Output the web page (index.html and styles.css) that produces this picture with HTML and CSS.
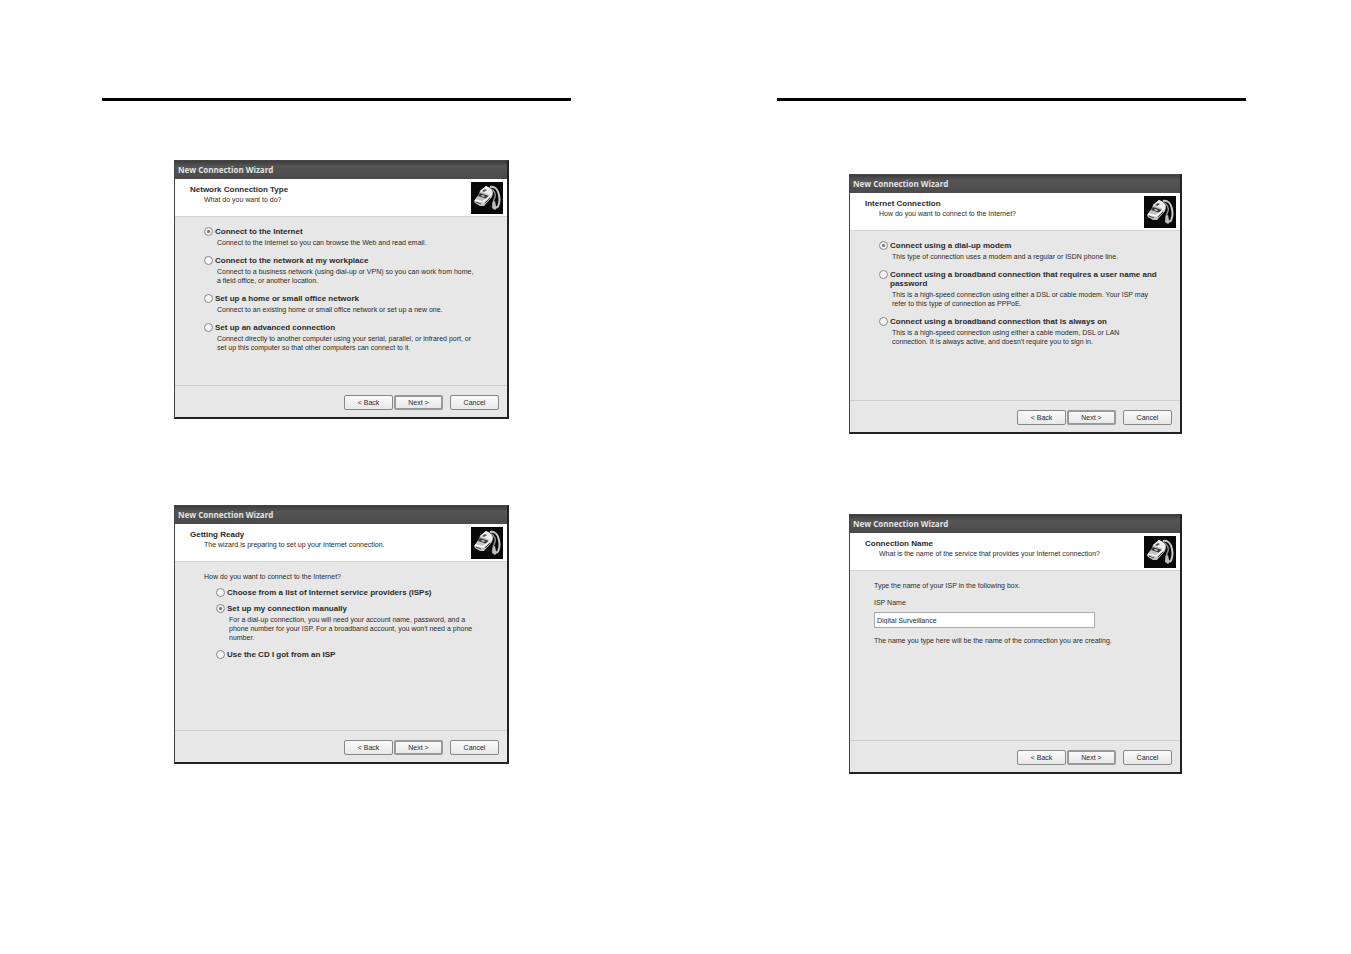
FILE: index.html
```html
<!DOCTYPE html>
<html lang="en">
<head>
    <meta charset="UTF-8">
    <meta name="viewport" content="width=device-width, initial-scale=1.0">
    <title>New Connection Wizard</title>
    <link rel="stylesheet" href="styles.css">
</head>
<body>
    <!-- Modem icon shared by all the dialogs -->
    <svg class="sprite" aria-hidden="true">
        <symbol id="modem" viewBox="0 0 32 32">
            <rect width="32" height="32" fill="#080808"/>
            <path d="M19 5 C24 4 27 8 28 13 C29 18 29 22 26 26" fill="none" stroke="#c8c8c8" stroke-width="2"/>
            <path d="M20 7 C23 8 25 12 24 15 C23 18 21 20 22 25" fill="none" stroke="#8c8c8c" stroke-width="1.5"/>
            <path d="M22 20 L24 19 L25 24 L27 25 L24 28 L21 26 Z" fill="#bdbdbd"/>
            <path d="M3 19 L8 12 L9 9 L15 4 L19 6 L22 11 L21 15 L13 24 L9 24 L4 21 Z" fill="#c4c4c4"/>
            <path d="M9 9 L15 4 L19 6 L22 10 L19 13 Z" fill="#efefef"/>
            <path d="M11 9 L14 7 L16 8 L13 10 Z" fill="#555"/>
            <path d="M9 11 L18 14 L16 17 L7 14 Z" fill="#383838"/>
            <path d="M11 13 L14 14 L13 15 L10 14 Z" fill="#ddd"/>
            <path d="M4 18 L12 20 L21 12" fill="none" stroke="#fff" stroke-width="1.5"/>
            <path d="M5 20 L10 22 M14 21 L19 16" fill="none" stroke="#4a4a4a" stroke-width="1"/>
        </symbol>
    </svg>

    <main class="spread">
        <section class="page page-left">
            <hr>
            <form class="wizard">
                <h2 class="titlebar">New Connection Wizard</h2>
                <header class="heading">
                    <div>
                        <h3>Network Connection Type</h3>
                        <p>What do you want to do?</p>
                    </div>
                    <svg class="modem"><use href="#modem"/></svg>
                </header>
                <div class="content">
                    <div class="option">
                        <input type="radio" name="type" id="internet" checked>
                        <label for="internet">Connect to the Internet</label>
                        <p>Connect to the Internet so you can browse the Web and read email.</p>
                    </div>
                    <div class="option">
                        <input type="radio" name="type" id="workplace">
                        <label for="workplace">Connect to the network at my workplace</label>
                        <p>Connect to a business network (using dial-up or VPN) so you can work from home,<br>a field office, or another location.</p>
                    </div>
                    <div class="option">
                        <input type="radio" name="type" id="home">
                        <label for="home">Set up a home or small office network</label>
                        <p>Connect to an existing home or small office network or set up a new one.</p>
                    </div>
                    <div class="option">
                        <input type="radio" name="type" id="advanced">
                        <label for="advanced">Set up an advanced connection</label>
                        <p>Connect directly to another computer using your serial, parallel, or infrared port, or<br>set up this computer so that other computers can connect to it.</p>
                    </div>
                </div>
                <footer class="actions">
                    <button type="button">&lt; Back</button>
                    <button type="button" class="default">Next &gt;</button>
                    <button type="button" class="cancel">Cancel</button>
                </footer>
            </form>

            <form class="wizard">
                <h2 class="titlebar">New Connection Wizard</h2>
                <header class="heading">
                    <div>
                        <h3>Getting Ready</h3>
                        <p>The wizard is preparing to set up your Internet connection.</p>
                    </div>
                    <svg class="modem"><use href="#modem"/></svg>
                </header>
                <div class="content ready">
                    <p>How do you want to connect to the Internet?</p>
                    <div class="option">
                        <input type="radio" name="method" id="list">
                        <label for="list">Choose from a list of Internet service providers (ISPs)</label>
                    </div>
                    <div class="option">
                        <input type="radio" name="method" id="manual" checked>
                        <label for="manual">Set up my connection manually</label>
                        <p>For a dial-up connection, you will need your account name, password, and a<br>phone number for your ISP. For a broadband account, you won't need a phone<br>number.</p>
                    </div>
                    <div class="option">
                        <input type="radio" name="method" id="cd">
                        <label for="cd">Use the CD I got from an ISP</label>
                    </div>
                </div>
                <footer class="actions">
                    <button type="button">&lt; Back</button>
                    <button type="button" class="default">Next &gt;</button>
                    <button type="button" class="cancel">Cancel</button>
                </footer>
            </form>
        </section>

        <section class="page page-right">
            <hr>
            <form class="wizard">
                <h2 class="titlebar">New Connection Wizard</h2>
                <header class="heading">
                    <div>
                        <h3>Internet Connection</h3>
                        <p>How do you want to connect to the Internet?</p>
                    </div>
                    <svg class="modem"><use href="#modem"/></svg>
                </header>
                <div class="content">
                    <div class="option">
                        <input type="radio" name="link" id="dialup" checked>
                        <label for="dialup">Connect using a dial-up modem</label>
                        <p>This type of connection uses a modem and a regular or ISDN phone line.</p>
                    </div>
                    <div class="option">
                        <input type="radio" name="link" id="pppoe">
                        <label for="pppoe">Connect using a broadband connection that requires a user name and<br>password</label>
                        <p>This is a high-speed connection using either a DSL or cable modem. Your ISP may<br>refer to this type of connection as PPPoE.</p>
                    </div>
                    <div class="option">
                        <input type="radio" name="link" id="always">
                        <label for="always">Connect using a broadband connection that is always on</label>
                        <p>This is a high-speed connection using either a cable modem, DSL or LAN<br>connection. It is always active, and doesn't require you to sign in.</p>
                    </div>
                </div>
                <footer class="actions">
                    <button type="button">&lt; Back</button>
                    <button type="button" class="default">Next &gt;</button>
                    <button type="button" class="cancel">Cancel</button>
                </footer>
            </form>

            <form class="wizard">
                <h2 class="titlebar">New Connection Wizard</h2>
                <header class="heading">
                    <div>
                        <h3>Connection Name</h3>
                        <p>What is the name of the service that provides your Internet connection?</p>
                    </div>
                    <svg class="modem"><use href="#modem"/></svg>
                </header>
                <div class="content naming">
                    <p>Type the name of your ISP in the following box.</p>
                    <label for="isp">ISP Name</label>
                    <input type="text" id="isp" value="Digital Surveillance">
                    <p>The name you type here will be the name of the connection you are creating.</p>
                </div>
                <footer class="actions">
                    <button type="button">&lt; Back</button>
                    <button type="button" class="default">Next &gt;</button>
                    <button type="button" class="cancel">Cancel</button>
                </footer>
            </form>
        </section>
    </main>
</body>
</html>
```
FILE: styles.css
```css
* {
    margin: 0;
    padding: 0;
    box-sizing: border-box;
}

body {
    background-color: #fff;
    color: #2a2a2a;
    font-family: "Liberation Sans", Arial, sans-serif;
    font-size: 7px;
    line-height: 9px;
}

.sprite {
    display: none;
}

/* Two printed pages side by side */
.spread {
    display: grid;
    grid-template-columns: 1fr 1fr;
    margin-right: 1px;
}

.page {
    display: flex;
    flex-direction: column;
    padding: 98px 104px 0 102px;
}

.page hr {
    border: none;
    height: 3px;
    background-color: #000;
}

.page-left {
    gap: 86px;
}

.page-left hr {
    margin-bottom: -27px;
}

.page-right {
    gap: 80px;
}

.page-right hr {
    margin-bottom: -7px;
}

.wizard {
    display: flex;
    flex-direction: column;
    min-height: 259px;
    margin: 0 62px 0 72px;
    background-color: #e7e7e7;
    border: 1px solid #444;
    border-right: 2px solid #222;
    border-bottom: 2px solid #222;
}

.page-right .wizard {
    min-height: 260px;
    margin-right: 64px;
}

.titlebar {
    height: 18px;
    padding-left: 3px;
    background: linear-gradient(#3c3c3c, #555 30%, #4a4a4a);
    color: #e4e4e4;
    font-family: "Open Sans", sans-serif;
    font-size: 8px;
    line-height: 18px;
}

.heading {
    display: flex;
    justify-content: space-between;
    height: 38px;
    padding: 3px 4px 0 15px;
    background-color: #fff;
    border-bottom: 1px solid #d4d4d4;
}

.heading h3 {
    padding-top: 3px;
    font-size: 8px;
}

.heading p {
    padding: 1px 0 0 14px;
}

.modem {
    width: 32px;
    height: 32px;
}

.content {
    display: flex;
    flex: 1;
    flex-direction: column;
    gap: 8px;
    padding: 9px 12px 0 29px;
}

.option {
    display: grid;
    grid-template-columns: 9px 1fr;
    column-gap: 2px;
}

.option label {
    padding: 1px 0 2px;
    font-size: 8px;
    font-weight: bold;
    white-space: nowrap;
}

.option p {
    grid-column: 2;
    padding-left: 2px;
}

input[type="radio"] {
    appearance: none;
    width: 9px;
    height: 9px;
    margin-top: 1px;
    background-color: #f6f6f6;
    border: 1px solid #888;
    border-radius: 50%;
}

input[type="radio"]:checked {
    background: radial-gradient(#777 1px, #f0f0f0 2px);
}

.ready {
    gap: 4px;
    padding-top: 10px;
}

.ready > p {
    padding-bottom: 2px;
}

.ready .option {
    padding-left: 12px;
}

.ready .option:last-child {
    padding-top: 3px;
}

.naming {
    padding: 10px 12px 0 24px;
}

.naming label {
    margin-bottom: -3px;
}

input[type="text"] {
    width: 75%;
    height: 16px;
    padding: 0 2px;
    background-color: #fff;
    border: 1px solid #aaa;
    color: #2a2a2a;
    font: inherit;
}

.actions {
    display: flex;
    justify-content: flex-end;
    height: 32px;
    padding: 9px 8px 0;
    border-top: 1px solid #ccc;
}

button {
    width: 49px;
    height: 15px;
    margin-left: 1px;
    background: linear-gradient(#fafafa, #e8e8e8);
    border: 1px solid #888;
    border-radius: 2px;
    color: #2a2a2a;
    font: inherit;
}

.default {
    border: 2px solid #999;
}

.cancel {
    margin-left: 7px;
}
```
